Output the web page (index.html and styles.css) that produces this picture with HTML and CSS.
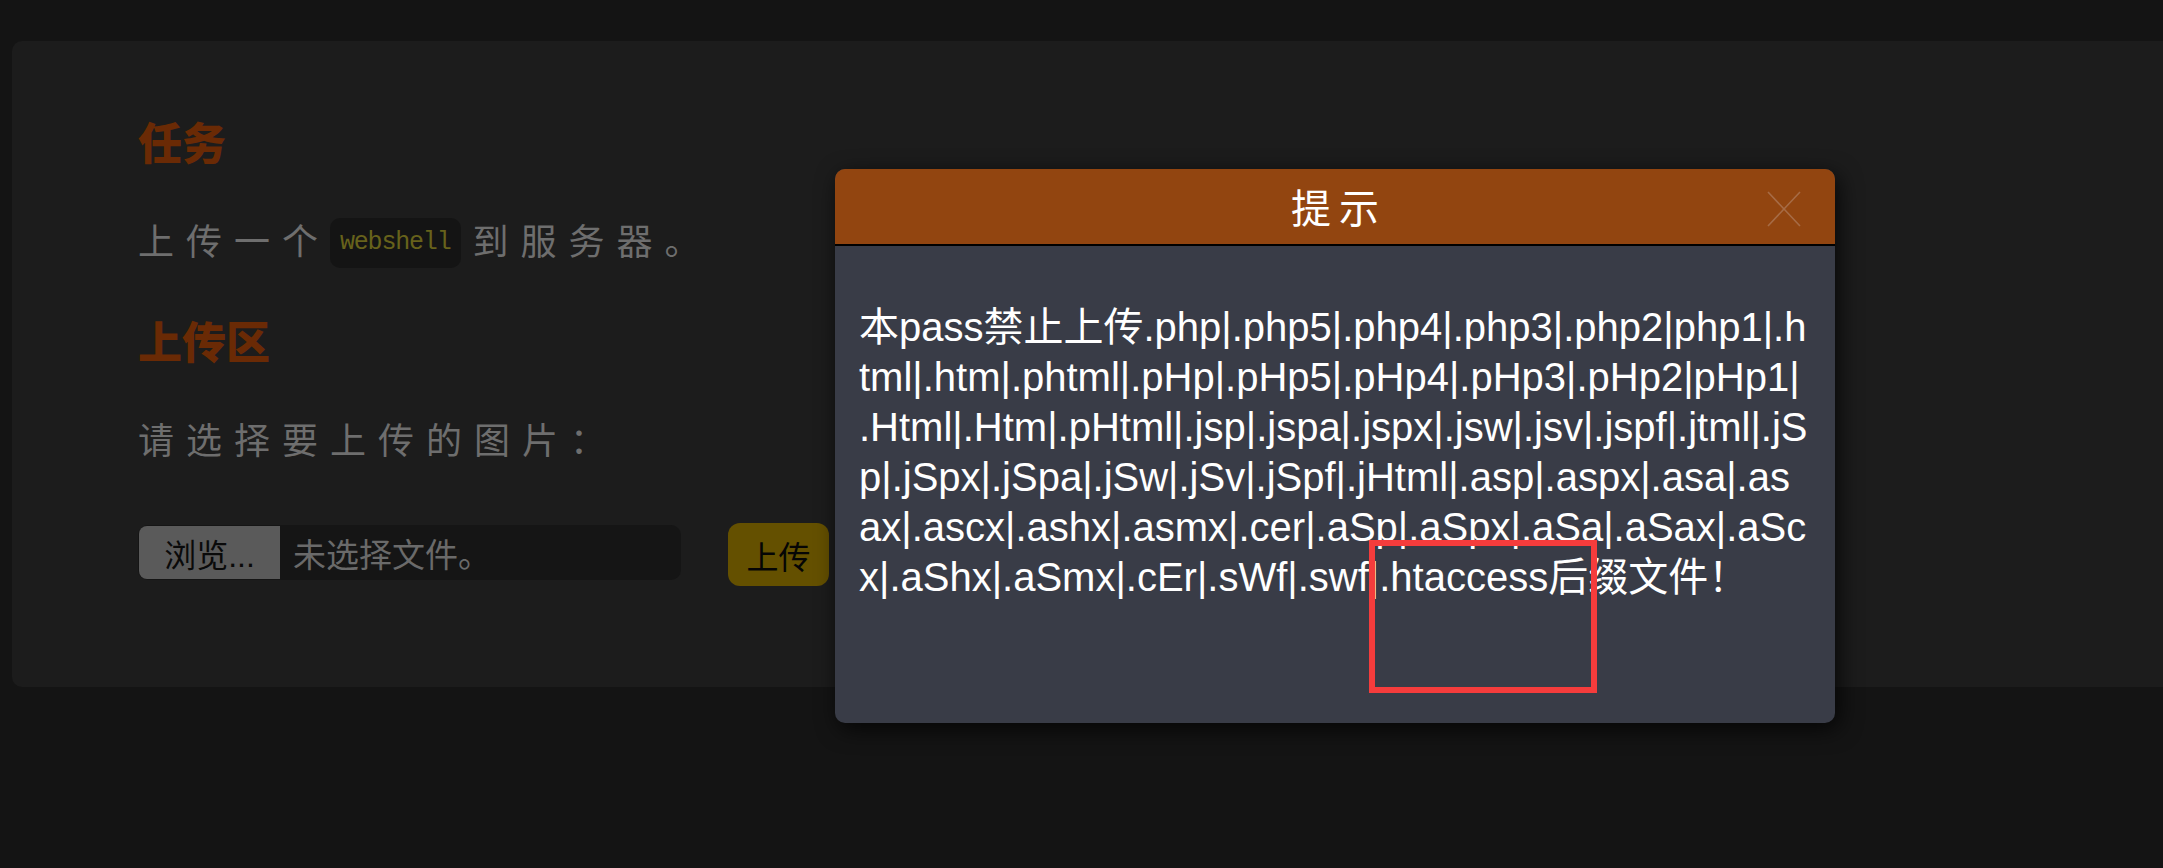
FILE: index.html
```html
<!DOCTYPE html>
<html lang="zh-CN">
<head>
<meta charset="utf-8">
<title>upload</title>
<link rel="stylesheet" href="styles.css">
</head>
<body>
<div class="page">
  <div class="card">
    <h2 class="title">任务</h2>
    <p class="text">上传一个<code class="code">webshell</code>到服务器。</p>
    <h2 class="title">上传区</h2>
    <p class="text">请选择要上传的图片：</p>
    <div class="form-row">
      <div class="file">
        <span class="browse">浏览...</span>
        <span class="fname">未选择文件。</span>
      </div>
      <span class="submit">上传</span>
    </div>
  </div>
</div>

<div class="modal">
  <div class="modal-head">
    <span class="modal-title">提示</span>
    <span class="modal-close">
      <svg width="34" height="36" viewBox="0 0 34 36"><path d="M1 1 L33 35 M33 1 L1 35" stroke="#a66b45" stroke-width="1.6" fill="none"/></svg>
    </span>
  </div>
  <div class="modal-body">本pass禁止上传.php|.php5|.php4|.php3|.php2|php1|.html|.htm|.phtml|.pHp|.pHp5|.pHp4|.pHp3|.pHp2|pHp1|.Html|.Htm|.pHtml|.jsp|.jspa|.jspx|.jsw|.jsv|.jspf|.jtml|.jSp|.jSpx|.jSpa|.jSw|.jSv|.jSpf|.jHtml|.asp|.aspx|.asa|.asax|.ascx|.ashx|.asmx|.cer|.aSp|.aSpx|.aSa|.aSax|.aScx|.aShx|.aSmx|.cEr|.sWf|.swf|.htaccess后缀文件！</div>
</div>

<div class="mark"></div>
</body>
</html>
```

FILE: styles.css
```css
html, body {
  margin: 0;
  padding: 0;
  overflow: hidden;
  background: #141414;
  width: 2163px;
  height: 868px;
}

body {
  position: relative;
  font-family: "Noto Sans CJK SC", "Liberation Sans", sans-serif;
}

.page {
  padding: 41px 0 0 12px;
}

.card {
  background: #1c1c1c;
  border-radius: 10px;
  margin-right: -40px;
  height: 646px;
  box-sizing: border-box;
  padding: 70px 0 0 126px;
}

.title {
  margin: 0 0 43px;
  font-size: 44px;
  line-height: 60px;
  font-weight: 900;
  color: #6a2a05;
}

.text {
  margin: 0 0 40px;
  font-size: 36px;
  line-height: 50px;
  letter-spacing: 12px;
  color: #6e6e6e;
  font-weight: 400;
}

.code {
  display: inline-block;
  vertical-align: middle;
  position: relative;
  top: -2px;
  height: 50px;
  line-height: 50px;
  box-sizing: border-box;
  padding: 0 11px 0 10px;
  margin-right: 11px;
  background: #141414;
  border-radius: 10px;
  font-family: "Liberation Mono", monospace;
  font-size: 25px;
  letter-spacing: -1.2px;
  color: #67621b;
}

.form-row {
  display: flex;
  align-items: flex-start;
  gap: 47px;
  margin-top: 60px;
  height: 63px;
}

.file {
  display: flex;
  align-items: stretch;
  width: 543px;
  height: 55px;
  margin-top: 2px;
  box-sizing: border-box;
  padding: 1px;
  background: #151515;
  border-radius: 10px;
}

.browse {
  width: 141px;
  display: flex;
  align-items: center;
  justify-content: center;
  background: #5a5a5a;
  border-radius: 8px 0 0 8px;
  font-family: "Liberation Sans", "Noto Sans CJK SC", sans-serif;
  font-size: 32px;
  color: #0a0a0a;
}

.fname {
  display: flex;
  align-items: center;
  padding-left: 13px;
  font-family: "Liberation Sans", "Noto Sans CJK SC", sans-serif;
  font-size: 33px;
  color: #6a6a6a;
}

.submit {
  width: 101px;
  height: 63px;
  display: flex;
  align-items: center;
  justify-content: center;
  background: #645000;
  border-radius: 12px;
  font-size: 32px;
  color: #050505;
}

.modal {
  position: absolute;
  left: 835px;
  top: 169px;
  width: 1000px;
  height: 554px;
  border-radius: 10px;
  background: #393c47;
  box-shadow: 4px 6px 22px rgba(0, 0, 0, 0.75);
  overflow: hidden;
}

.modal-head {
  position: relative;
  height: 75px;
  background: #924510;
  border-bottom: 2px solid #000;
  display: flex;
  justify-content: center;
  align-items: center;
}

.modal-title {
  font-size: 40px;
  line-height: 75px;
  letter-spacing: 8px;
  text-indent: 8px;
  color: #fff;
}

.modal-close {
  position: absolute;
  left: 932px;
  top: 22px;
  width: 34px;
  height: 36px;
  display: block;
}

.modal-close svg {
  display: block;
}

.modal-body {
  box-sizing: border-box;
  height: 477px;
  padding: 56px 25px 0 24px;
  font-family: "Liberation Sans", "Noto Sans CJK SC", sans-serif;
  font-size: 40px;
  line-height: 50px;
  font-kerning: none;
  word-break: break-all;
  line-break: anywhere;
  color: #fff;
}

.mark {
  position: absolute;
  left: 1369px;
  top: 540px;
  width: 228px;
  height: 153px;
  box-sizing: border-box;
  border: 6px solid #f53c3c;
}
```
